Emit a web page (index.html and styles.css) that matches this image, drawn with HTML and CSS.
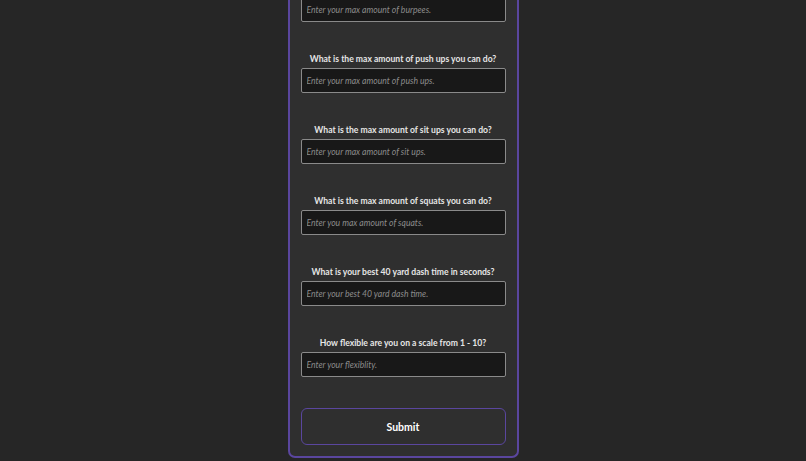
FILE: index.html
```html
<!DOCTYPE html>
<html lang="en">
<head>
    <meta charset="UTF-8">
    <meta name="viewport" content="width=device-width, initial-scale=1.0">
    <title>Fitness test</title>
    <link rel="stylesheet" href="styles.css">
</head>
<body>

    <form class="quiz">
        <div class="field">
            <label for="burpees">What is the max amount of burpees you can do?</label>
            <input id="burpees" type="text" placeholder="Enter your max amount of burpees.">
        </div>

        <div class="field">
            <label for="pushups">What is the max amount of push ups you can do?</label>
            <input id="pushups" type="text" placeholder="Enter your max amount of push ups.">
        </div>

        <div class="field">
            <label for="situps">What is the max amount of sit ups you can do?</label>
            <input id="situps" type="text" placeholder="Enter your max amount of sit ups.">
        </div>

        <div class="field">
            <label for="squats">What is the max amount of squats you can do?</label>
            <input id="squats" type="text" placeholder="Enter you max amount of squats.">
        </div>

        <div class="field">
            <label for="dash">What is your best 40 yard dash time in seconds?</label>
            <input id="dash" type="text" placeholder="Enter your best 40 yard dash time.">
        </div>

        <div class="field">
            <label for="flex">How flexible are you on a scale from 1 - 10?</label>
            <input id="flex" type="text" placeholder="Enter your flexiblity.">
        </div>

        <button class="submit" type="submit">Submit</button>
    </form>

</body>
</html>
```

FILE: styles.css
```css
body {
    background-color: #262626;
    margin: 0;
    font-family: Lato, "Open Sans", sans-serif;
    color: #e6e6e6;
}

.quiz {
    width: 205px;
    margin: -49px auto 3px;
    padding: 0 11px 11px;
    background-color: #2f2f2f;
    border: 2px solid #5a469e;
    border-top: none;
    border-radius: 0 0 7px 7px;
}

.field {
    padding-top: 31px;
}

.field label {
    display: block;
    text-align: center;
    font-size: 8.6px;
    font-weight: 700;
    line-height: 12px;
    margin-bottom: 3px;
}

.field input {
    box-sizing: border-box;
    display: block;
    width: 205px;
    height: 25px;
    margin: 0;
    padding: 0 5px;
    background-color: #181818;
    border: 1px solid #8a8a8a;
    border-radius: 2px;
    color: #ddd;
    font-family: inherit;
    font-size: 8.6px;
    font-style: italic;
}

.field input::placeholder {
    color: #8c8c8c;
}

.submit {
    box-sizing: border-box;
    display: block;
    width: 205px;
    height: 37px;
    margin-top: 31px;
    background-color: #2f2f2f;
    border: 1.5px solid #5a469e;
    border-radius: 6px;
    color: #fff;
    font-family: inherit;
    font-size: 10.5px;
    font-weight: 700;
}
```
